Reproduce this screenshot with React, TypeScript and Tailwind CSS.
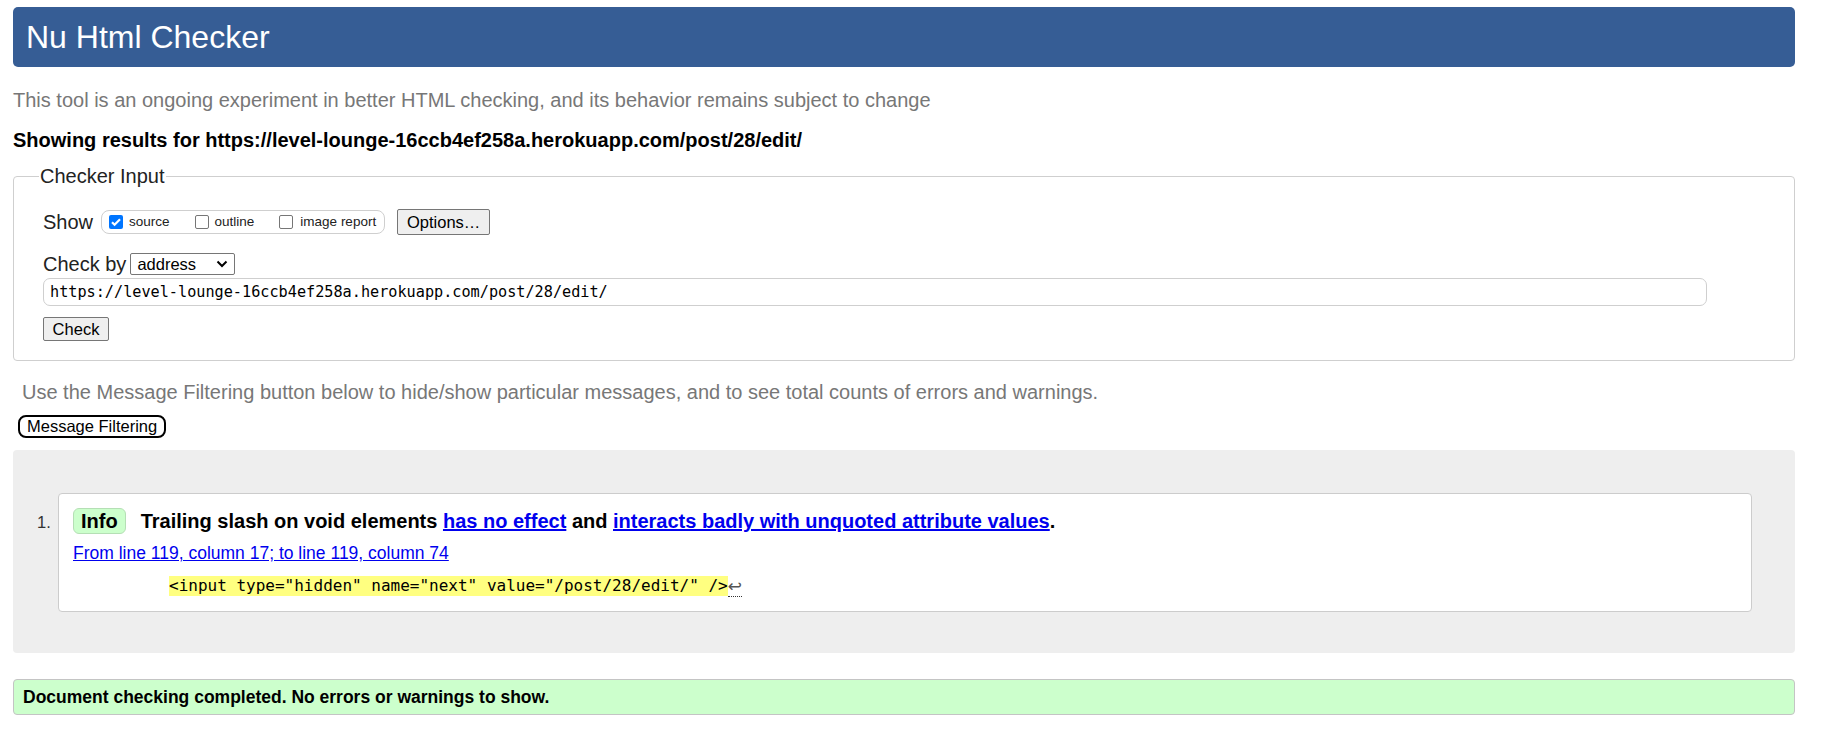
function Checkbox({ checked }: { checked?: boolean }) {
  if (checked) {
    return (
      <span className="flex h-[14px] w-[14px] shrink-0 items-center justify-center rounded-[2px] bg-[#0075ff]">
        <svg viewBox="0 0 14 14" className="h-[14px] w-[14px]" fill="none" stroke="white" strokeWidth="2.2">
          <path d="M3 7.2l2.6 2.6L11 4.3" />
        </svg>
      </span>
    );
  }
  return <span className="block h-[14px] w-[14px] shrink-0 rounded-[2px] border border-[#767676] bg-white" />;
}

export default function App() {
  return (
    <div className="min-h-screen bg-white pt-[7px] pr-[30px] pl-[13px] font-['Liberation_Sans',Arial,sans-serif] text-black">
      <header className="flex h-[60px] items-center rounded-[5px] bg-[#365d95] pl-[13px]">
        <h1 className="text-[32px] leading-none text-white">Nu Html Checker</h1>
      </header>

      <p className="mt-[22px] h-[22px] text-[20px] leading-[22px] text-[#777]">
        This tool is an ongoing experiment in better HTML checking, and its behavior remains subject to change
      </p>
      <p className="mt-[18px] h-[22px] text-[20px] font-bold leading-[22px]">
        Showing results for https://level-lounge-16ccb4ef258a.herokuapp.com/post/28/edit/
      </p>

      <fieldset className="mt-[13px] rounded-[4px] border border-[#cfcfcf] pb-[19px] pl-[29px]">
        <legend className="-ml-[4px] px-[1px] text-[20px] leading-[24px] text-[#222]">Checker Input</legend>

        <div className="mt-[21px] flex h-[26px] items-center">
          <span className="text-[20px] leading-[24px] text-[#222]">Show</span>
          <div className="ml-[8px] flex h-[24px] items-center rounded-[8px] border border-[#cfcfcf] pr-[8px] pl-[7px] text-[13.5px] text-[#222]">
            <Checkbox checked />
            <span className="ml-[6px]">source</span>
            <span className="ml-[25px] block">
              <Checkbox />
            </span>
            <span className="ml-[6px]">outline</span>
            <span className="ml-[25px] block">
              <Checkbox />
            </span>
            <span className="ml-[7px]">image report</span>
          </div>
          <button className="ml-[12px] flex h-[26px] w-[93px] items-center justify-center rounded-[2px] border border-[#767676] bg-[#efefef] text-[16.5px] text-black">
            Options…
          </button>
        </div>

        <div className="mt-[18px] flex h-[22px] items-center">
          <span className="text-[20px] leading-[24px] text-[#222]">Check by</span>
          <div className="ml-[4px] flex h-[22px] w-[105px] items-center justify-between rounded-[2px] border border-[#767676] bg-white pr-[6px] pl-[6px] text-[16.5px]">
            <span>address</span>
            <svg viewBox="0 0 12 8" className="h-[8px] w-[12px]" fill="none" stroke="black" strokeWidth="2">
              <path d="M1.5 1.5L6 6l4.5-4.5" />
            </svg>
          </div>
        </div>

        <div className="mt-[3px] flex h-[28px] w-[1664px] items-center rounded-[7px] border border-[#cfcfcf] pl-[6px] font-['DejaVu_Sans_Mono',monospace] text-[15.2px] text-black">
          https://level-lounge-16ccb4ef258a.herokuapp.com/post/28/edit/
        </div>

        <button className="mt-[11px] flex h-[24px] w-[66px] items-center justify-center rounded-[2px] border border-[#767676] bg-[#efefef] text-[16.5px] text-black">
          Check
        </button>
      </fieldset>

      <p className="mt-[19px] ml-[9px] h-[24px] text-[20px] leading-[24px] text-[#777]">
        Use the Message Filtering button below to hide/show particular messages, and to see total counts of errors and warnings.
      </p>
      <button className="mt-[11px] ml-[5px] flex h-[23px] items-center rounded-[8px] border-2 border-black px-[7px] text-[16.5px] leading-none text-black">
        Message Filtering
      </button>

      <section className="mt-[12px] flex items-start rounded-[4px] bg-[#eeeeee] pt-[43px] pr-[43px] pb-[41px] pl-[24px]">
        <span className="mt-[17px] w-[21px] text-[16.5px] leading-[24px] text-[#333]">1.</span>
        <div className="flex-1 rounded-[4px] border border-[#cccccc] bg-white pt-[14px] pb-[15px] pl-[14px]">
          <div className="flex h-[26px] items-center">
            <span className="flex h-[26px] items-center rounded-[6px] border border-[#b5dfb5] bg-[#ccffcc] px-[7px] text-[20px] font-bold">
              Info
            </span>
            <p className="ml-[15px] text-[20px] font-bold">
              Trailing slash on void elements{' '}
              <a href="#" className="text-[#0000ee] underline">has no effect</a> and{' '}
              <a href="#" className="text-[#0000ee] underline">interacts badly with unquoted attribute values</a>.
            </p>
          </div>
          <a href="#" className="mt-[9px] block h-[20px] w-fit text-[17.5px] leading-[20px] text-[#0000ee] underline">
            From line 119, column 17; to line 119, column 74
          </a>
          <div className="mt-[13px] flex h-[20px] items-center pl-[96px] font-['DejaVu_Sans_Mono',monospace] text-[16px] leading-[20px]">
            <span className="bg-[#ffff80] text-black">{'<input type="hidden" name="next" value="/post/28/edit/" />'}</span>
            <span className="border-b border-dotted border-[#333] font-['DejaVu_Sans',sans-serif] text-[17px] leading-[20px] text-[#555]">↩</span>
          </div>
        </div>
      </section>

      <div className="mt-[26px] flex h-[36px] items-center rounded-[4px] border border-[#c4c4c4] bg-[#ccffcc] pl-[9px] text-[17.5px] font-bold">
        Document checking completed. No errors or warnings to show.
      </div>
    </div>
  );
}
